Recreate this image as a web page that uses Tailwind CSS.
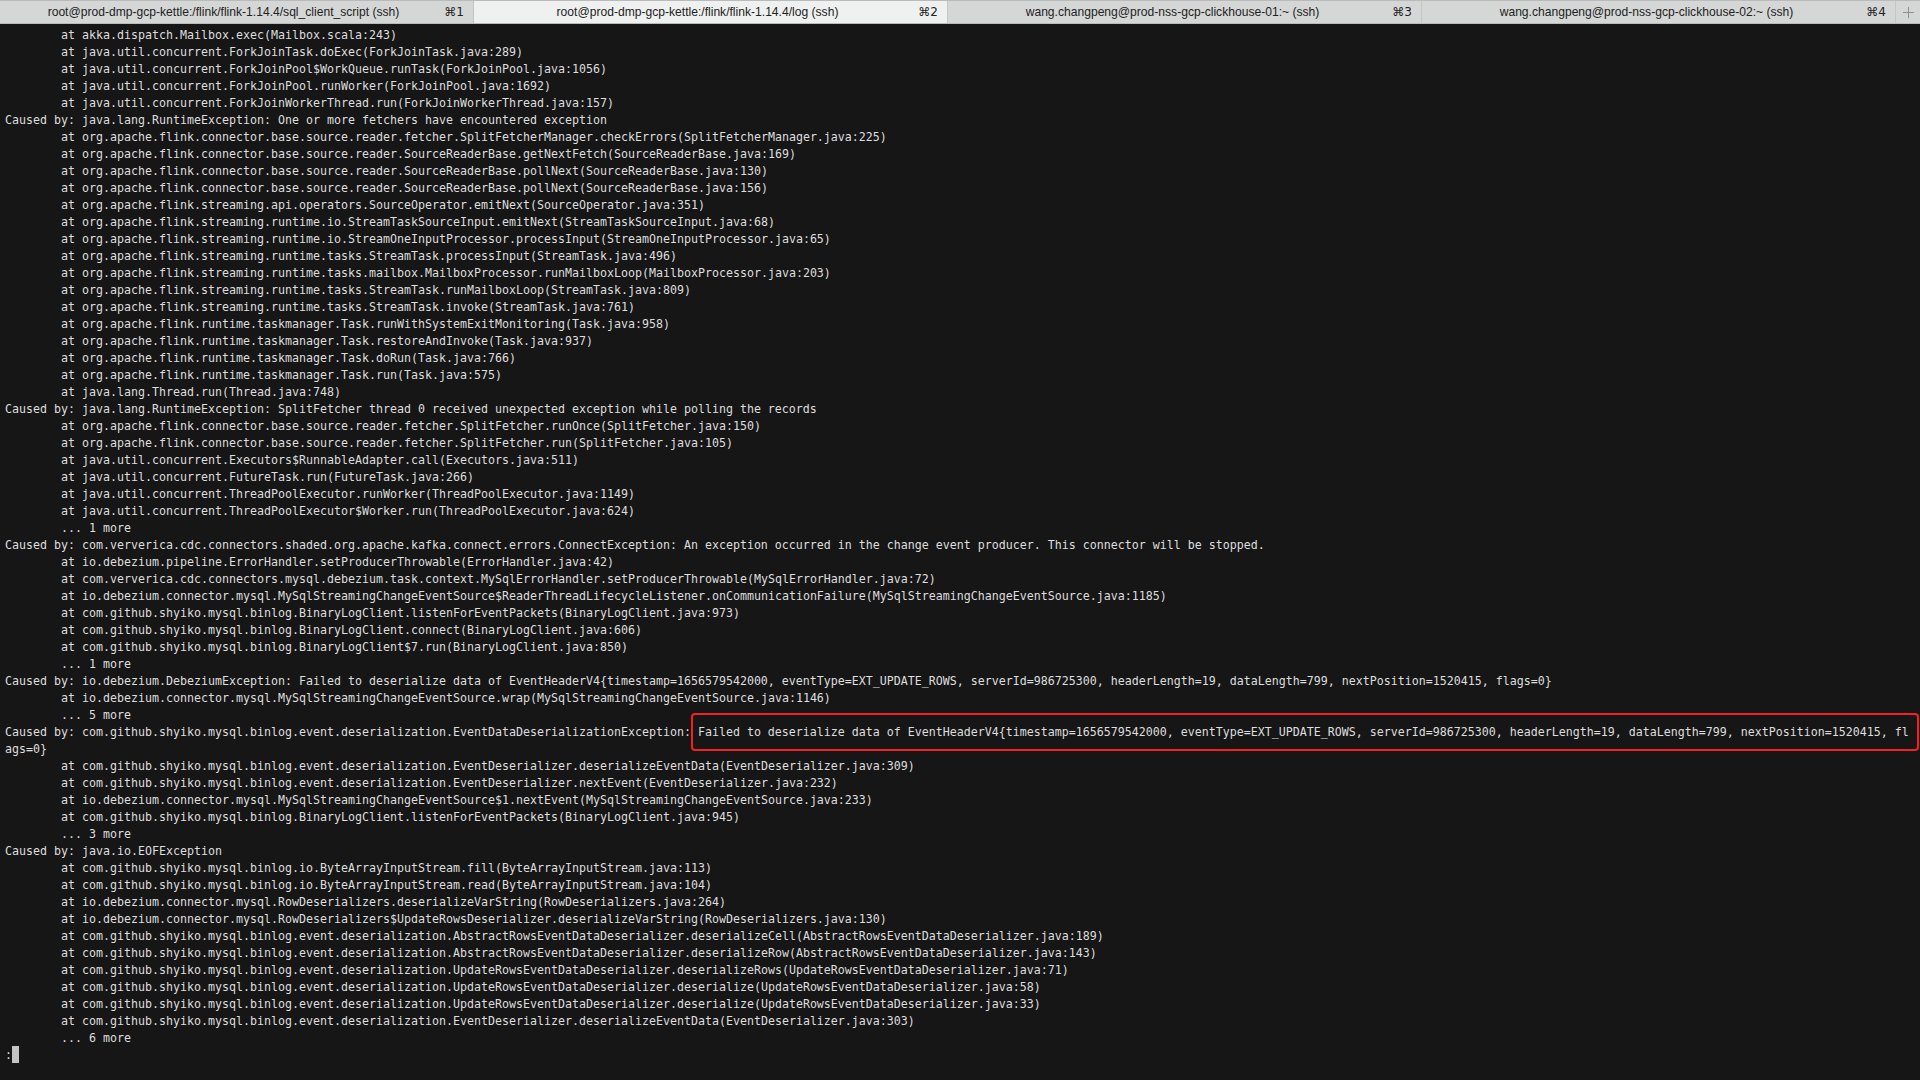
<!DOCTYPE html>
<html lang="en">
<head>
  <meta charset="UTF-8" />
  <title>iTerm</title>
  <script src="https://cdn.jsdelivr.net/npm/@tailwindcss/browser@4"></script>
</head>
<body class="bg-[#161616] h-screen overflow-hidden flex flex-col">

  <div class="flex h-6 shrink-0 bg-[#d5d7d6] border-t border-b border-[#b9bbba] text-[#222] text-[12.1px] font-['Liberation_Sans',sans-serif]">
    <div class="w-[474px] relative flex items-center justify-center pr-[26px] border-r border-[#c4c6c5]">
      <span>root@prod-dmp-gcp-kettle:/flink/flink-1.14.4/sql_client_script (ssh)</span>
      <span class="absolute right-[9px] font-['DejaVu_Sans',sans-serif] text-[12px]">⌘1</span>
    </div>
    <div class="w-[474px] relative flex items-center justify-center pr-[26px] bg-[#eff1f0] border-r border-[#c4c6c5]">
      <span>root@prod-dmp-gcp-kettle:/flink/flink-1.14.4/log (ssh)</span>
      <span class="absolute right-[9px] font-['DejaVu_Sans',sans-serif] text-[12px]">⌘2</span>
    </div>
    <div class="w-[474px] relative flex items-center justify-center pr-[24px] border-r border-[#c4c6c5]">
      <span>wang.changpeng@prod-nss-gcp-clickhouse-01:~ (ssh)</span>
      <span class="absolute right-[9px] font-['DejaVu_Sans',sans-serif] text-[12px]">⌘3</span>
    </div>
    <div class="w-[474px] relative flex items-center justify-center pr-[24px] border-r border-[#c4c6c5]">
      <span>wang.changpeng@prod-nss-gcp-clickhouse-02:~ (ssh)</span>
      <span class="absolute right-[9px] font-['DejaVu_Sans',sans-serif] text-[12px]">⌘4</span>
    </div>
    <div class="flex-1 flex items-center justify-center">
      <svg width="11" height="11" viewBox="0 0 11 11" class="stroke-[#8f9190]"><path d="M5.5 0v11M0 5.5h11" fill="none" stroke-width="1"/></svg>
    </div>
  </div>

  <div class="relative flex-1 flex flex-col pt-[3px] pl-[5px] text-[#dedede] text-[11.63px] leading-[17px] whitespace-pre [tab-size:8] font-['DejaVu_Sans_Mono',monospace]">
    <div>	at akka.dispatch.Mailbox.exec(Mailbox.scala:243)</div>
    <div>	at java.util.concurrent.ForkJoinTask.doExec(ForkJoinTask.java:289)</div>
    <div>	at java.util.concurrent.ForkJoinPool$WorkQueue.runTask(ForkJoinPool.java:1056)</div>
    <div>	at java.util.concurrent.ForkJoinPool.runWorker(ForkJoinPool.java:1692)</div>
    <div>	at java.util.concurrent.ForkJoinWorkerThread.run(ForkJoinWorkerThread.java:157)</div>
    <div>Caused by: java.lang.RuntimeException: One or more fetchers have encountered exception</div>
    <div>	at org.apache.flink.connector.base.source.reader.fetcher.SplitFetcherManager.checkErrors(SplitFetcherManager.java:225)</div>
    <div>	at org.apache.flink.connector.base.source.reader.SourceReaderBase.getNextFetch(SourceReaderBase.java:169)</div>
    <div>	at org.apache.flink.connector.base.source.reader.SourceReaderBase.pollNext(SourceReaderBase.java:130)</div>
    <div>	at org.apache.flink.connector.base.source.reader.SourceReaderBase.pollNext(SourceReaderBase.java:156)</div>
    <div>	at org.apache.flink.streaming.api.operators.SourceOperator.emitNext(SourceOperator.java:351)</div>
    <div>	at org.apache.flink.streaming.runtime.io.StreamTaskSourceInput.emitNext(StreamTaskSourceInput.java:68)</div>
    <div>	at org.apache.flink.streaming.runtime.io.StreamOneInputProcessor.processInput(StreamOneInputProcessor.java:65)</div>
    <div>	at org.apache.flink.streaming.runtime.tasks.StreamTask.processInput(StreamTask.java:496)</div>
    <div>	at org.apache.flink.streaming.runtime.tasks.mailbox.MailboxProcessor.runMailboxLoop(MailboxProcessor.java:203)</div>
    <div>	at org.apache.flink.streaming.runtime.tasks.StreamTask.runMailboxLoop(StreamTask.java:809)</div>
    <div>	at org.apache.flink.streaming.runtime.tasks.StreamTask.invoke(StreamTask.java:761)</div>
    <div>	at org.apache.flink.runtime.taskmanager.Task.runWithSystemExitMonitoring(Task.java:958)</div>
    <div>	at org.apache.flink.runtime.taskmanager.Task.restoreAndInvoke(Task.java:937)</div>
    <div>	at org.apache.flink.runtime.taskmanager.Task.doRun(Task.java:766)</div>
    <div>	at org.apache.flink.runtime.taskmanager.Task.run(Task.java:575)</div>
    <div>	at java.lang.Thread.run(Thread.java:748)</div>
    <div>Caused by: java.lang.RuntimeException: SplitFetcher thread 0 received unexpected exception while polling the records</div>
    <div>	at org.apache.flink.connector.base.source.reader.fetcher.SplitFetcher.runOnce(SplitFetcher.java:150)</div>
    <div>	at org.apache.flink.connector.base.source.reader.fetcher.SplitFetcher.run(SplitFetcher.java:105)</div>
    <div>	at java.util.concurrent.Executors$RunnableAdapter.call(Executors.java:511)</div>
    <div>	at java.util.concurrent.FutureTask.run(FutureTask.java:266)</div>
    <div>	at java.util.concurrent.ThreadPoolExecutor.runWorker(ThreadPoolExecutor.java:1149)</div>
    <div>	at java.util.concurrent.ThreadPoolExecutor$Worker.run(ThreadPoolExecutor.java:624)</div>
    <div>	... 1 more</div>
    <div>Caused by: com.ververica.cdc.connectors.shaded.org.apache.kafka.connect.errors.ConnectException: An exception occurred in the change event producer. This connector will be stopped.</div>
    <div>	at io.debezium.pipeline.ErrorHandler.setProducerThrowable(ErrorHandler.java:42)</div>
    <div>	at com.ververica.cdc.connectors.mysql.debezium.task.context.MySqlErrorHandler.setProducerThrowable(MySqlErrorHandler.java:72)</div>
    <div>	at io.debezium.connector.mysql.MySqlStreamingChangeEventSource$ReaderThreadLifecycleListener.onCommunicationFailure(MySqlStreamingChangeEventSource.java:1185)</div>
    <div>	at com.github.shyiko.mysql.binlog.BinaryLogClient.listenForEventPackets(BinaryLogClient.java:973)</div>
    <div>	at com.github.shyiko.mysql.binlog.BinaryLogClient.connect(BinaryLogClient.java:606)</div>
    <div>	at com.github.shyiko.mysql.binlog.BinaryLogClient$7.run(BinaryLogClient.java:850)</div>
    <div>	... 1 more</div>
    <div>Caused by: io.debezium.DebeziumException: Failed to deserialize data of EventHeaderV4{timestamp=1656579542000, eventType=EXT_UPDATE_ROWS, serverId=986725300, headerLength=19, dataLength=799, nextPosition=1520415, flags=0}</div>
    <div>	at io.debezium.connector.mysql.MySqlStreamingChangeEventSource.wrap(MySqlStreamingChangeEventSource.java:1146)</div>
    <div>	... 5 more</div>
    <div>Caused by: com.github.shyiko.mysql.binlog.event.deserialization.EventDataDeserializationException: Failed to deserialize data of EventHeaderV4{timestamp=1656579542000, eventType=EXT_UPDATE_ROWS, serverId=986725300, headerLength=19, dataLength=799, nextPosition=1520415, fl</div>
    <div>ags=0}</div>
    <div>	at com.github.shyiko.mysql.binlog.event.deserialization.EventDeserializer.deserializeEventData(EventDeserializer.java:309)</div>
    <div>	at com.github.shyiko.mysql.binlog.event.deserialization.EventDeserializer.nextEvent(EventDeserializer.java:232)</div>
    <div>	at io.debezium.connector.mysql.MySqlStreamingChangeEventSource$1.nextEvent(MySqlStreamingChangeEventSource.java:233)</div>
    <div>	at com.github.shyiko.mysql.binlog.BinaryLogClient.listenForEventPackets(BinaryLogClient.java:945)</div>
    <div>	... 3 more</div>
    <div>Caused by: java.io.EOFException</div>
    <div>	at com.github.shyiko.mysql.binlog.io.ByteArrayInputStream.fill(ByteArrayInputStream.java:113)</div>
    <div>	at com.github.shyiko.mysql.binlog.io.ByteArrayInputStream.read(ByteArrayInputStream.java:104)</div>
    <div>	at io.debezium.connector.mysql.RowDeserializers.deserializeVarString(RowDeserializers.java:264)</div>
    <div>	at io.debezium.connector.mysql.RowDeserializers$UpdateRowsDeserializer.deserializeVarString(RowDeserializers.java:130)</div>
    <div>	at com.github.shyiko.mysql.binlog.event.deserialization.AbstractRowsEventDataDeserializer.deserializeCell(AbstractRowsEventDataDeserializer.java:189)</div>
    <div>	at com.github.shyiko.mysql.binlog.event.deserialization.AbstractRowsEventDataDeserializer.deserializeRow(AbstractRowsEventDataDeserializer.java:143)</div>
    <div>	at com.github.shyiko.mysql.binlog.event.deserialization.UpdateRowsEventDataDeserializer.deserializeRows(UpdateRowsEventDataDeserializer.java:71)</div>
    <div>	at com.github.shyiko.mysql.binlog.event.deserialization.UpdateRowsEventDataDeserializer.deserialize(UpdateRowsEventDataDeserializer.java:58)</div>
    <div>	at com.github.shyiko.mysql.binlog.event.deserialization.UpdateRowsEventDataDeserializer.deserialize(UpdateRowsEventDataDeserializer.java:33)</div>
    <div>	at com.github.shyiko.mysql.binlog.event.deserialization.EventDeserializer.deserializeEventData(EventDeserializer.java:303)</div>
    <div>	... 6 more</div>
    <div class="flex items-center">:<span class="w-[7px] h-[17px] -translate-y-px bg-[#c4c4c4]"></span></div>

    <!-- red annotation box -->
    <div class="absolute left-[691px] right-[1px] top-[689px] h-[38px] border-2 border-[#f5201f] rounded-[4px]"></div>
  </div>

</body>
</html>
